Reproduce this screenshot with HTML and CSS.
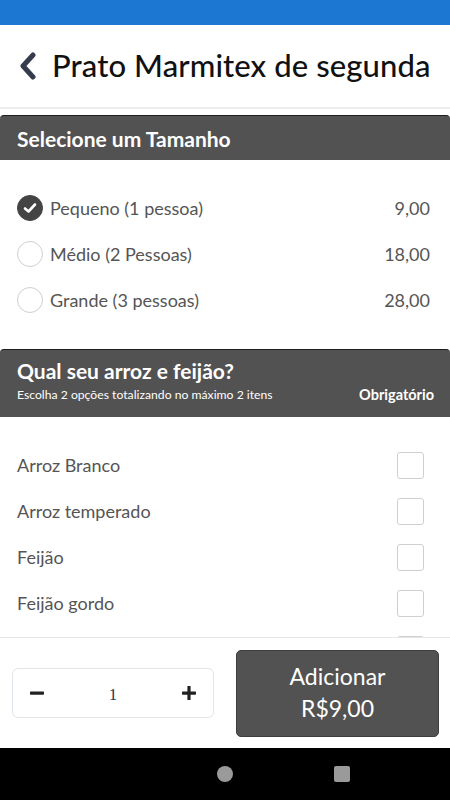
FILE: index.html
```html
<!DOCTYPE html>
<html lang="pt-BR">
<head>
<meta charset="utf-8">
<title>Prato Marmitex de segunda</title>
<link rel="stylesheet" href="styles.css">
</head>
<body>
<div class="app">
  <div class="statusbar"></div>
  <header class="topbar">
    <svg class="back" width="20" height="28" viewBox="0 0 20 28"><path d="M15 3 L5 14 L15 25" fill="none" stroke="#363b4e" stroke-width="5" stroke-linecap="round" stroke-linejoin="round"/></svg>
    <h1 class="title">Prato Marmitex de segunda</h1>
  </header>
  <main class="content">
    <section class="group">
      <div class="group-head single">
        <h2 class="group-title">Selecione um Tamanho</h2>
      </div>
      <ul class="options sizes">
        <li class="opt">
          <span class="radio checked"><svg width="14" height="12" viewBox="0 0 14 12"><path d="M2 6.5 L5.5 9.5 L12 2.5" fill="none" stroke="#fff" stroke-width="2.6" stroke-linecap="round" stroke-linejoin="round"/></svg></span>
          <span class="opt-label">Pequeno (1 pessoa)</span>
          <span class="opt-price">9,00</span>
        </li>
        <li class="opt">
          <span class="radio"></span>
          <span class="opt-label">Médio (2 Pessoas)</span>
          <span class="opt-price">18,00</span>
        </li>
        <li class="opt">
          <span class="radio"></span>
          <span class="opt-label">Grande (3 pessoas)</span>
          <span class="opt-price">28,00</span>
        </li>
      </ul>
    </section>
    <section class="group">
      <div class="group-head double">
        <h2 class="group-title">Qual seu arroz e feijão?</h2>
        <div class="group-sub">
          <span class="hint">Escolha 2 opções totalizando no máximo 2 itens</span>
          <span class="req">Obrigatório</span>
        </div>
      </div>
      <ul class="options checks">
        <li class="opt"><span class="opt-label">Arroz Branco</span><span class="box"></span></li>
        <li class="opt"><span class="opt-label">Arroz temperado</span><span class="box"></span></li>
        <li class="opt"><span class="opt-label">Feijão</span><span class="box"></span></li>
        <li class="opt"><span class="opt-label">Feijão gordo</span><span class="box"></span></li>
        <li class="opt"><span class="opt-label"></span><span class="box"></span></li>
      </ul>
    </section>
  </main>
  <footer class="footer">
    <div class="qty">
      <button class="qbtn"><svg width="14" height="14" viewBox="0 0 14 14"><rect x="0" y="5.5" width="14" height="3.2" rx="0.6" fill="#222"/></svg></button>
      <span class="qval">1</span>
      <button class="qbtn"><svg width="14" height="14" viewBox="0 0 14 14"><rect x="0" y="5.5" width="14" height="3.2" rx="0.6" fill="#222"/><rect x="5.4" y="0" width="3.2" height="14" rx="0.6" fill="#222"/></svg></button>
    </div>
    <button class="add">
      <span>Adicionar</span>
      <span>R$9,00</span>
    </button>
  </footer>
  <nav class="navbar">
    <span class="nav-circle"></span>
    <span class="nav-square"></span>
  </nav>
</div>
</body>
</html>
```
FILE: styles.css
```css
* { box-sizing: border-box; }
html, body { margin: 0; padding: 0; }
body {
  font-family: "Lato", "Open Sans", sans-serif;
  background: #fff;
  color: #555;
}
.app {
  width: 450px;
  height: 800px;
  display: flex;
  flex-direction: column;
  overflow: hidden;
}
.statusbar {
  height: 25px;
  background: #1b77d2;
  flex: none;
}
.topbar {
  flex: none;
  height: 84px;
  display: flex;
  align-items: center;
  gap: 14px;
  padding: 0 0 0 18px;
  border-bottom: 2px solid #ececec;
}
.back { flex: none; }
.title {
  margin: 0 0 2px 0;
  font-size: 31px;
  font-weight: 500;
  color: #111;
  letter-spacing: 0.1px;
}
.content {
  flex: 1;
  overflow: hidden;
  padding-top: 6px;
}
.group-head {
  background: #525252;
  color: #fff;
  border-top: 1px solid #1e1e1e;
  border-radius: 4px 4px 0 0;
  padding: 0 16px 0 17px;
}
.group-head.single {
  height: 45px;
  display: flex;
  align-items: center;
}
.group-head.double {
  height: 68px;
  padding-top: 7px;
}
.group-title {
  margin: 0;
  font-size: 21px;
  font-weight: 700;
  line-height: 27px;
}
.group-sub {
  display: flex;
  justify-content: space-between;
  align-items: center;
  margin-top: 2px;
}
.hint { font-size: 12.2px; }
.req { font-size: 14.5px; font-weight: 700; }
.options {
  list-style: none;
  margin: 0;
  padding: 0 20px 0 17px;
}
.sizes { padding-top: 25px; padding-bottom: 26px; }
.checks { padding-top: 25px; padding-right: 26px; }
.opt {
  height: 46px;
  display: flex;
  align-items: center;
  font-size: 18px;
  color: #555;
}
.opt-label { flex: 1; }
.opt-price { color: #555; }
.radio {
  width: 26px;
  height: 26px;
  border-radius: 50%;
  border: 1px solid #cfcfcf;
  margin-right: 7px;
  flex: none;
  display: flex;
  align-items: center;
  justify-content: center;
}
.radio.checked {
  background: #444;
  border-color: #444;
}
.box {
  width: 27px;
  height: 27px;
  border: 1px solid #cfcfcf;
  border-radius: 3px;
  flex: none;
}
.footer {
  flex: none;
  height: 111px;
  border-top: 1px solid #e6e6e6;
  display: flex;
  align-items: flex-start;
  padding: 12px 11px 0 12px;
  gap: 22px;
  background: #fff;
}
.qty {
  width: 202px;
  height: 50px;
  margin-top: 18px;
  border: 1px solid #e1e6ea;
  border-radius: 6px;
  display: flex;
  align-items: center;
  justify-content: space-between;
  padding: 0 17px 0 17px;
}
.qbtn {
  background: none;
  border: 0;
  padding: 0;
  width: 14px;
  height: 14px;
  display: flex;
}
.qval {
  font-family: "Liberation Serif", serif;
  font-size: 17px;
  color: #2f3550;
  margin-top: 3px;
}
.add {
  flex: 1;
  height: 87px;
  background: #525252;
  border: 1px solid #3e3e3e;
  border-radius: 5px;
  color: #fff;
  font-family: "Lato", "Open Sans", sans-serif;
  font-size: 23px;
  display: flex;
  flex-direction: column;
  align-items: center;
  justify-content: center;
  line-height: 32px;
  padding: 0 0 4px 0;
}
.navbar {
  flex: none;
  height: 52px;
  background: #000;
  display: flex;
  align-items: center;
  padding-left: 217px;
  gap: 101px;
}
.nav-circle {
  width: 16px;
  height: 16px;
  border-radius: 50%;
  background: #9a9a9a;
}
.nav-square {
  width: 16px;
  height: 16px;
  border-radius: 2px;
  background: #9a9a9a;
}
```
